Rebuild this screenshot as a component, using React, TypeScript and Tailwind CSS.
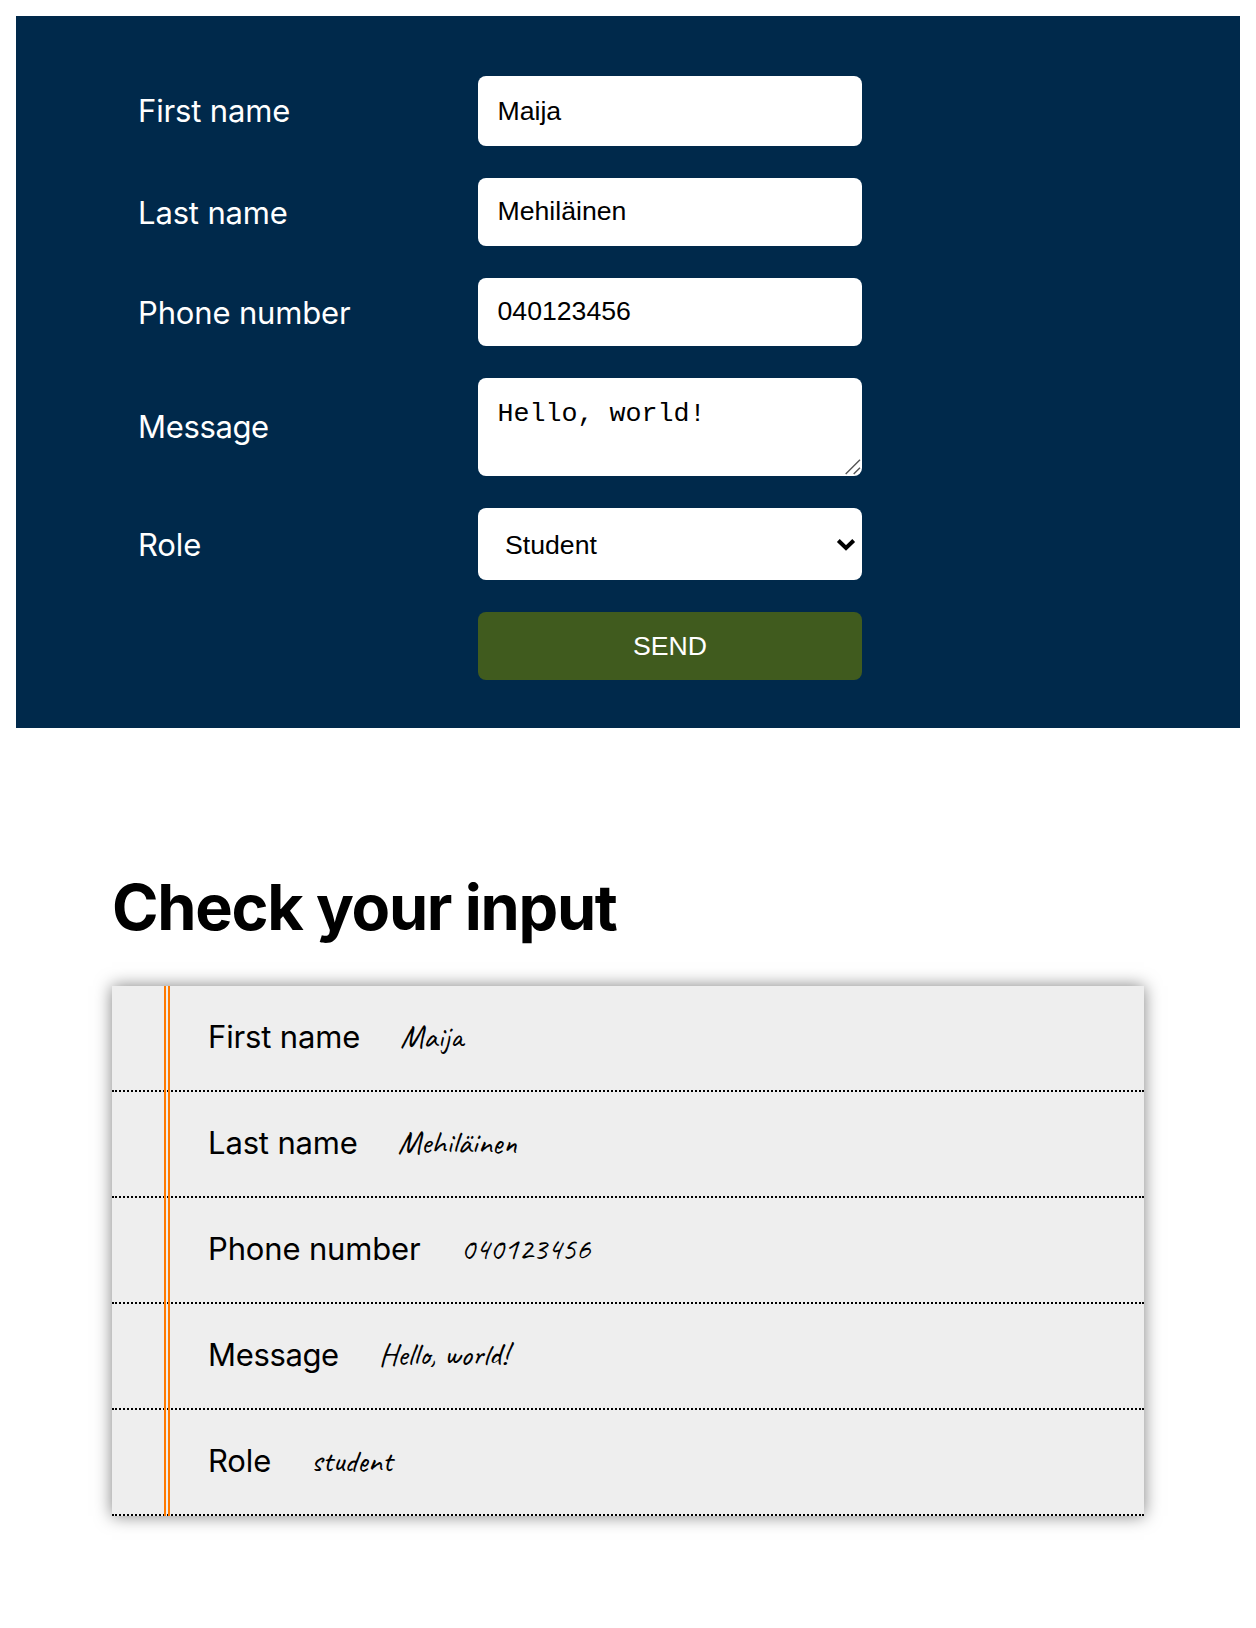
import React from "react";

type Field = { label: string; value: string };

const summary: Field[] = [
  { label: "First name", value: "Maija" },
  { label: "Last name", value: "Mehiläinen" },
  { label: "Phone number", value: "040123456" },
  { label: "Message", value: "Hello, world!" },
  { label: "Role", value: "student" },
];

const labelClass =
  "font-['Inter',sans-serif] text-[31px] leading-[38px] whitespace-nowrap";
const controlClass =
  "block w-full h-full rounded-lg bg-white text-black text-[26.667px] px-[19.5px] outline-none";

function labelTracking(label?: string) {
  return label === "Message" ? "tracking-[-0.35px]" : "tracking-[-0.15px]";
}

function Row({
  label,
  height,
  nudge = "",
  children,
}: {
  label?: string;
  height: string;
  nudge?: string;
  children: React.ReactNode;
}) {
  return (
    <div className={`grid grid-cols-[340px_384px] items-center ${height}`}>
      <span className={`${labelClass} ${labelTracking(label)} text-white ${nudge}`}>{label}</span>
      <div className="relative h-full">{children}</div>
    </div>
  );
}

export default function App() {
  return (
    <main className="min-h-[1628px] bg-white p-4 text-black">
      <form className="flex flex-col gap-8 bg-[#00294b] pt-[60px] pb-12 pl-[122px]">
        <Row label="First name" height="h-[70px]">
          <input
            className={`${controlClass} font-['Liberation_Sans',sans-serif]`}
            defaultValue="Maija"
          />
        </Row>
        <Row label="Last name" height="h-[68px]" nudge="pt-0.5">
          <input
            className={`${controlClass} pb-0.5 font-['Liberation_Sans',sans-serif]`}
            defaultValue="Mehiläinen"
          />
        </Row>
        <Row label="Phone number" height="h-[68px]" nudge="pt-0.5">
          <input
            className={`${controlClass} pb-0.5 font-['Liberation_Sans',sans-serif]`}
            defaultValue="040123456"
          />
        </Row>
        <Row label="Message" height="h-[98px]">
          <textarea
            className={`${controlClass} resize-none overflow-hidden pt-[21px] leading-[30px] font-['Liberation_Mono',monospace]`}
            defaultValue="Hello, world!"
          />
          <svg
            className="absolute right-px bottom-px"
            width="16"
            height="16"
            viewBox="0 0 16 16"
            fill="none"
            stroke="#555"
            strokeWidth="1.4"
          >
            <path d="M0.7 15 15 0.7M8.7 15 15 8.7" />
          </svg>
        </Row>
        <Row label="Role" height="h-[72px]" nudge="pt-0.5">
          <select
            className={`${controlClass} appearance-none pt-0.5 pl-[27px] font-['Liberation_Sans',sans-serif]`}
            defaultValue="student"
          >
            <option value="student">Student</option>
          </select>
          <svg
            className="pointer-events-none absolute top-[30px] right-1.5"
            width="20"
            height="14"
            viewBox="0 0 20 14"
            fill="none"
            stroke="#000"
            strokeWidth="4"
          >
            <path d="M2.3 2.5 10 10 17.7 2.5" />
          </svg>
        </Row>
        <Row height="h-[68px]">
          <button
            type="button"
            className="h-full w-full rounded-lg bg-[#405b1e] text-[26.667px] text-white font-['Liberation_Sans',sans-serif]"
          >
            SEND
          </button>
        </Row>
      </form>

      <section className="px-24 pt-[140px]">
        <h1 className="font-['Inter',sans-serif] text-[63px] leading-[78px] font-bold tracking-[-1.3px]">
          Check your input
        </h1>
        <ul className="relative mt-10 bg-[#eee] shadow-[0_0_16px_rgba(0,0,0,0.5)]">
          {summary.map((item) => (
            <li
              key={item.label}
              className="flex h-[106px] items-baseline gap-[41px] border-b-2 border-dotted border-black pt-8 pl-24"
            >
              <span className={`${labelClass} ${labelTracking(item.label)}`}>{item.label}</span>
              <span className="-translate-x-px -translate-y-px font-['Caveat',cursive] text-[32px] leading-[38px] whitespace-nowrap">
                {item.value}
              </span>
            </li>
          ))}
          <li
            aria-hidden="true"
            className="absolute inset-y-0 left-[52px] w-1.5 border-x-2 border-[#ff7a00]"
          />
        </ul>
      </section>
    </main>
  );
}
